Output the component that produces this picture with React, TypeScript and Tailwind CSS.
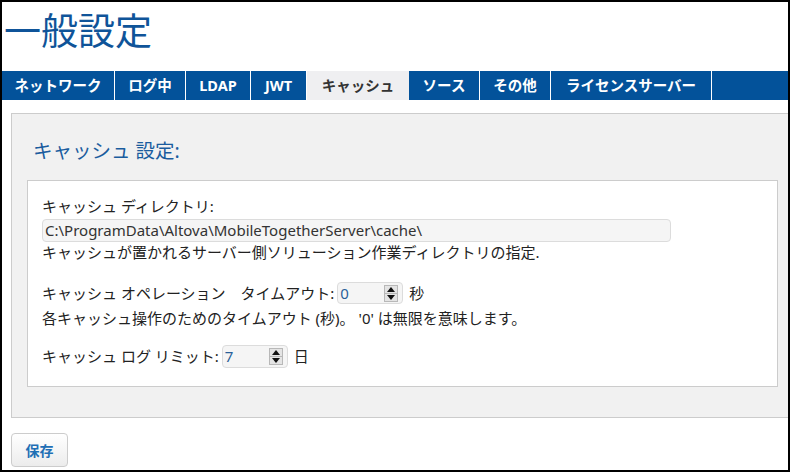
import React from 'react';

const FONT = { fontFamily: '"Noto Sans", "Noto Sans CJK JP", sans-serif' };

const tabs: Array<{ label: string; width: string; active?: boolean }> = [
  { label: 'ネットワーク', width: 'w-[113px]' },
  { label: 'ログ中', width: 'w-[71px]' },
  { label: 'LDAP', width: 'w-[65px]' },
  { label: 'JWT', width: 'w-[56px]' },
  { label: 'キャッシュ', width: 'w-[102px]', active: true },
  { label: 'ソース', width: 'w-[71px]' },
  { label: 'その他', width: 'w-[71px]' },
  { label: 'ライセンスサーバー', width: 'w-[161px]' },
];

const Spinner = () => (
  <span className="flex flex-col w-[14px] h-[17px] border border-[#b8b8b8] bg-[#e4e4e4]">
    <span className="flex-1 flex items-center justify-center border-b border-[#b8b8b8]">
      <svg width="8" height="5" viewBox="0 0 8 5">
        <path d="M0 5 L4 0 L8 5 Z" fill="#111" />
      </svg>
    </span>
    <span className="flex-1 flex items-center justify-center">
      <svg width="8" height="5" viewBox="0 0 8 5">
        <path d="M0 0 L4 5 L8 0 Z" fill="#111" />
      </svg>
    </span>
  </span>
);

const NumberBox = ({ value, height }: { value: string; height: string }) => (
  <span
    className={`inline-flex items-center justify-between w-[66px] ${height} pl-[2px] pr-[4px] bg-[#f5f5f5] border border-[#dcdcdc] rounded-[4px]`}
  >
    <span className="text-[15px] text-[#2a5f99]">{value}</span>
    <Spinner />
  </span>
);

export default function App() {
  return (
    <div
      className="w-[790px] h-[472px] border-2 border-black bg-white text-[#222] overflow-hidden"
      style={FONT}
    >
      <h1 className="h-[69px] pl-[2px] pt-[3px] text-[37px] leading-[52px] text-[#0f5499] font-normal">
        一般設定
      </h1>

      <div className="flex h-[29px] bg-[#03529a]">
        {tabs.map((tab) => (
          <div
            key={tab.label}
            className={`${tab.width} flex items-center justify-center text-[14.5px] font-bold ${
              tab.active ? 'bg-[#efeff1] text-[#333]' : 'text-white border-r border-white'
            }`}
          >
            {tab.label}
          </div>
        ))}
        <div className="flex-1" />
      </div>

      <div className="mt-[13px] ml-[9px] h-[305px] bg-[#f1f1f1] border-t border-l border-b border-[#cccccc] pl-[15px] pr-[10px]">
        <h2 className="pl-[6px] pt-[23px] h-[66px] text-[19.5px] leading-[28px] text-[#1a5c9e] font-normal">
          キャッシュ 設定:
        </h2>

        <div className="h-[207px] bg-white border border-[#cccccc] pl-[14px] pt-[15px] text-[15px]">
          <div className="h-[20px] leading-[20px]">キャッシュ ディレクトリ:</div>
          <div className="mt-[3px] w-[629px] h-[23px] flex items-center px-[2px] bg-[#f5f5f5] border border-[#dcdcdc] rounded-[4px] text-[15px] text-[#333]">
            C:\ProgramData\Altova\MobileTogetherServer\cache\
          </div>
          <div className="h-[20px] leading-[20px]">キャッシュが置かれるサーバー側ソリューション作業ディレクトリの指定.</div>

          <div className="mt-[20px] flex items-center gap-[3px] h-[22px]">
            <span>キャッシュ オペレーション　タイムアウト:</span>
            <NumberBox value="0" height="h-[22px]" />
            <span className="ml-[3px]">秒</span>
          </div>
          <div className="mt-[4px] h-[20px] leading-[20px]">
            各キャッシュ操作のためのタイムアウト (秒)。 '0' は無限を意味します。
          </div>

          <div className="mt-[17px] flex items-center gap-[3px] h-[23px]">
            <span>キャッシュ ログ リミット:</span>
            <NumberBox value="7" height="h-[23px]" />
            <span className="ml-[3px]">日</span>
          </div>
        </div>
      </div>

      <div className="mt-[15px] ml-[9px]">
        <button
          type="button"
          className="w-[57px] h-[34px] rounded-[4px] border border-[#cccccc] bg-gradient-to-b from-white to-[#ececec] text-[14px] font-bold text-[#1f6fb5]"
        >
          保存
        </button>
      </div>
    </div>
  );
}
